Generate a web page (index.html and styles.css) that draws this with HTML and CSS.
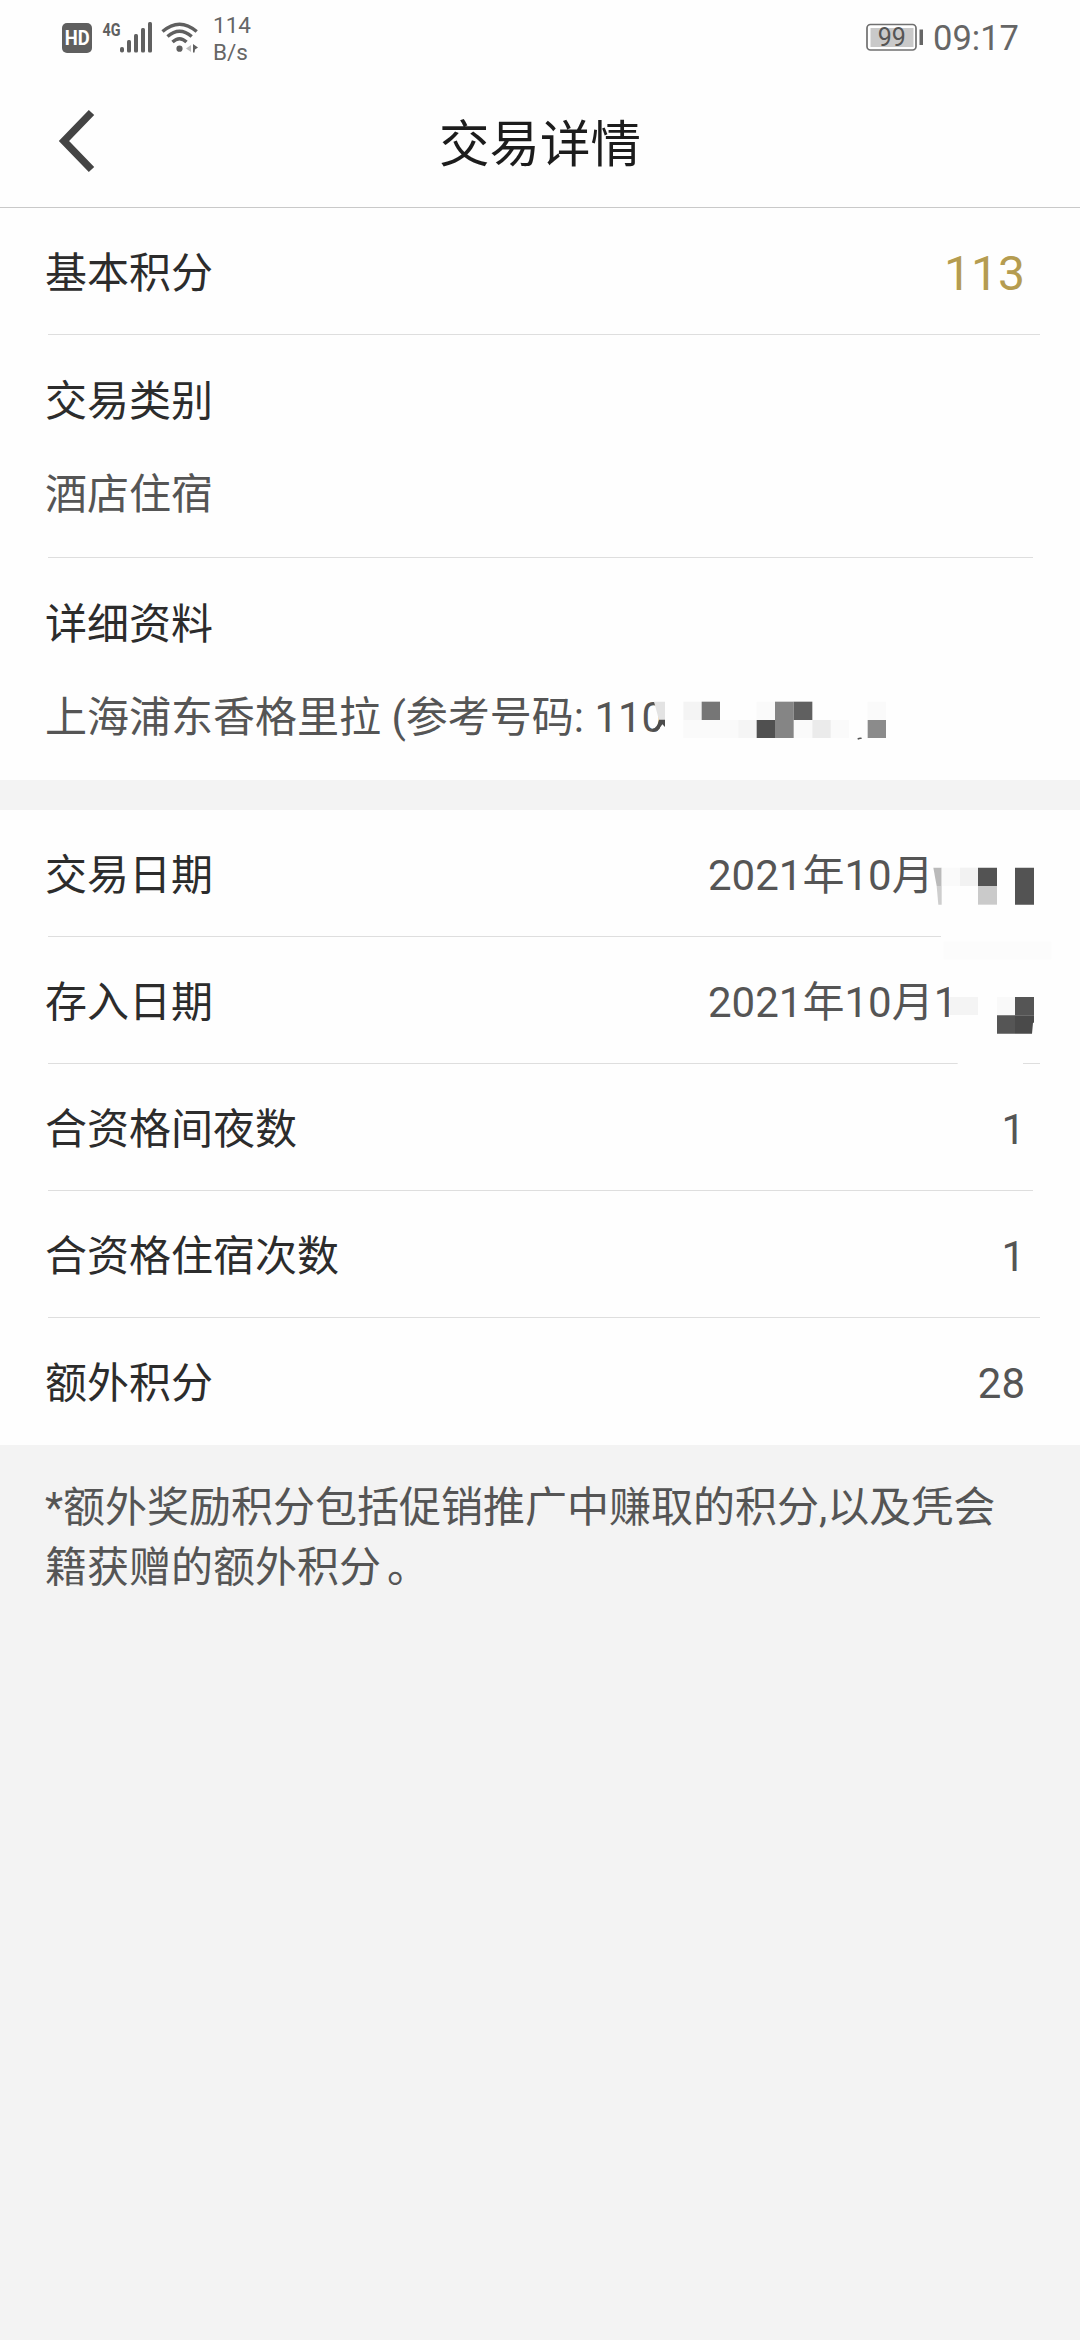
FILE: index.html
```html
<!DOCTYPE html>
<html lang="zh-CN">
<head>
<meta charset="utf-8">
<title>交易详情</title>
<link rel="stylesheet" href="styles.css">
</head>
<body>
<div class="status">
  <svg class="status-icons" width="148" height="40" viewBox="0 0 148 40">
    <rect x="2" y="7" width="30" height="30" rx="5" fill="#5f5f5f"/>
    <text class="hd" x="4.8" y="29" textLength="25" lengthAdjust="spacingAndGlyphs">HD</text>
    <text class="gen" x="42.5" y="20" textLength="18" lengthAdjust="spacingAndGlyphs">4G</text>
    <g fill="#606060">
      <rect x="60" y="31" width="4" height="5.5" rx="1.8"/>
      <rect x="67" y="24" width="4" height="12.5" rx="1.5"/>
      <rect x="74" y="18" width="4" height="18.5" rx="1.5"/>
      <rect x="81" y="12" width="4" height="24.500" rx="1.5"/>
      <rect x="88" y="6" width="4" height="30.5" rx="1.5"/>
    </g>
    <g fill="none" stroke="#5f5f5f" stroke-width="3.4">
      <path d="M102.500 15.500Q119.500 .8 136.700 15.500"/>
      <path d="M107.500 20.500Q119.500 9.800 131.700 20.500"/>
      <path d="M112.500 26Q119.500 19.500 126.500 26"/>
    </g>
    <circle cx="119.500" cy="32.700" r="3.100" fill="#5f5f5f"/>
    <path d="M131 29v7l-5-3.500z" fill="#bdbdbd"/>
    <path d="M133 28l5 3.500-3 2-.5 3-1.500 0z" fill="#5f5f5f"/>
  </svg>
  <div class="speed"><span>114</span><span>B/s</span></div>
  <svg class="battery" width="60" height="30" viewBox="0 0 60 30">
    <rect x="2" y="2.500" width="49" height="25.500" rx="3.500" fill="#fff" stroke="#707070" stroke-width="1.700"/>
    <rect x="5.500" y="6" width="43" height="19" fill="#c9c9c9"/>
    <rect x="54.500" y="7.500" width="3.500" height="15.500" fill="#666"/>
    <text class="charge" x="26.700" y="23.500" text-anchor="middle">99</text>
  </svg>
  <div class="time">09:17</div>
</div>
<header class="header">
  <svg class="back" width="40" height="64" viewBox="0 0 40 64">
    <path d="M34.500 3.500 7 32l27.500 28.500" fill="none" stroke="#444" stroke-width="7.500" stroke-linejoin="miter"/>
  </svg>
  <h1 class="title">交易详情</h1>
</header>
<section class="group">
  <div class="row"><span class="label">基本积分</span><span class="points">113</span></div>
  <div class="block short"><span class="label">交易类别</span><span class="value">酒店住宿</span></div>
  <div class="block last"><span class="label">详细资料</span><span class="value detail">上海浦东香格里拉 (参考号码: 110
    <svg class="mask-ref" width="280" height="80" viewBox="0 0 840 240">
      <path d="M42 50H840V170H0V156H50L60 145V120z" fill="#fefefe"/>
      <path d="M42 65H75V120H57z" fill="#e3e3e3"/>
      <path d="M57 119H75V141L67 133Q56 153 38 153V146Q51 145 57 119z" fill="#4c4c4c"/>
      <path d="M130 65h55v55h-55z" fill="#f4f4f4"/>
      <path d="M185 65h55v55h-55z" fill="#767676"/>
      <path d="M130 120h165v54H130zM350 65h55v55h-55zM683 65h55v55h-55zM461 120h56v54h-56zM572 120h55v54h-55z" fill="#fafafa"/>
      <path d="M295 120h55v54h-55z" fill="#f5f5f5"/>
      <path d="M350 120h56v54h-56z" fill="#505050"/>
      <path d="M405 65h56v109h-56z" fill="#858585"/>
      <path d="M461 65h56v55h-56z" fill="#606060"/>
      <path d="M517 120h55v54h-55z" fill="#ebebeb"/>
      <path d="M683 120h55v54h-55z" fill="#8b8b8b"/>
      <path d="M653 178q4-4 12-3" fill="none" stroke="#555" stroke-width="4"/>
    </svg></span></div>
</section>
<section class="group dates">
  <div class="row"><span class="label">交易日期</span><span class="value date">2021年10月</span></div>
  <div class="row"><span class="label">存入日期</span><span class="value date">2021年10月1</span></div>
  <div class="row short"><span class="label">合资格间夜数</span><span class="value">1</span></div>
  <div class="row"><span class="label">合资格住宿次数</span><span class="value">1</span></div>
  <div class="row last"><span class="label">额外积分</span><span class="value">28</span></div>
  <svg class="mask-dates" width="400" height="270" viewBox="0 0 1200 810">
    <path d="M783 335H1130V420H783zM833 700H1029V760H833zM807 480H1130V620H807z" fill="#fefefe"/>
    <path d="M790 365H1115V418H790z" fill="#fcfcfc"/>
    <path d="M760 143H785V198H770z" fill="#bababa"/>
    <path d="M770 198H785V254H775z" fill="#cecece"/>
    <path d="M785 143h55v55h-55z" fill="#fafafa"/>
    <path d="M840 143h54v55h-54z" fill="#f2f2f2"/>
    <path d="M894 143h57v55h-57zM1005 143h57v111h-57z" fill="#535353"/>
    <path d="M894 198h57v56h-57z" fill="#cacaca"/>
    <path d="M808 531h86v54h-86z" fill="#f4f4f4"/>
    <path d="M951 531h54v55h-54z" fill="#f9f9f9"/>
    <path d="M1005 531h57v55h-57zM951 586h54v55h-54z" fill="#555"/>
    <path d="M1005 586h57v22h-3l-3 33h-51z" fill="#4a4a4a"/>
  </svg>
</section>
<p class="note">*额外奖励积分包括促销推广中赚取的积分,以及凭会籍获赠的额外积分<span class="stop">。</span></p>
</body>
</html>
```
FILE: styles.css
```css
* { box-sizing: border-box; }
body {
  margin: 0;
  min-height: 2340px;
  background: #f3f3f3;
  color: #555;
  font: 42px/60px Roboto, "Noto Sans CJK SC", sans-serif;
}
.status {
  display: flex;
  height: 80px;
  padding: 0 61px 0 60px;
  align-items: flex-start;
  background: #fefefe;
  color: #666;
}
.status-icons { margin-top: 16px; }
.hd { font: 700 20.5px Roboto, sans-serif; fill: #fff; }
.gen { font: 700 19px Roboto, sans-serif; fill: #606060; }
.speed {
  display: flex;
  flex-direction: column;
  margin: 12px auto 0 5px;
  font-size: 22.5px;
  line-height: 27px;
}
.battery { margin-top: 22px; }
.charge { font: 25px Roboto, sans-serif; fill: #555; }
.time {
  margin-left: 8px;
  padding-top: 18px;
  font-size: 34.5px;
  line-height: 40px;
}
.header {
  display: grid;
  grid-template-columns: 140px 1fr 140px;
  align-items: center;
  height: 128px;
  border-bottom: 1px solid #c9c9c9;
  background: #fefefe;
}
.back { margin: -5px 0 0 57px; }
.title {
  margin: 0;
  padding-top: 3px;
  text-align: center;
  font-size: 50.5px;
  font-weight: 400;
  color: #1c1c1c;
}
.group { background: #fefefe; }
.row, .block { position: relative; padding: 0 55px 0 45px; }
.row {
  display: flex;
  height: 127px;
  padding-top: 5px;
  align-items: center;
  justify-content: space-between;
}
.block {
  display: flex;
  flex-direction: column;
  gap: 33px;
  height: 223px;
  padding-top: 37px;
}
.block.last { height: 222px; }
.row::after, .block::after {
  content: "";
  position: absolute;
  left: 48px;
  right: 40px;
  bottom: 0;
  height: 1px;
  background: #dedede;
}
.row.short::after, .block.short::after { right: 47px; }
.row.last::after, .block.last::after { display: none; }
.label { color: #2c2c2c; }
.points { font-size: 48px; color: #b59c50; }
.detail { position: relative; white-space: nowrap; }
.mask-ref { position: absolute; left: 595px; top: -8px; }
.dates { position: relative; margin-top: 30px; }
.date { width: 317px; }
.mask-dates { position: absolute; left: 680px; top: 10px; }
.note { margin: 0; padding: 33px 60px 0 45px; }
.stop { margin-left: 6px; }
```
